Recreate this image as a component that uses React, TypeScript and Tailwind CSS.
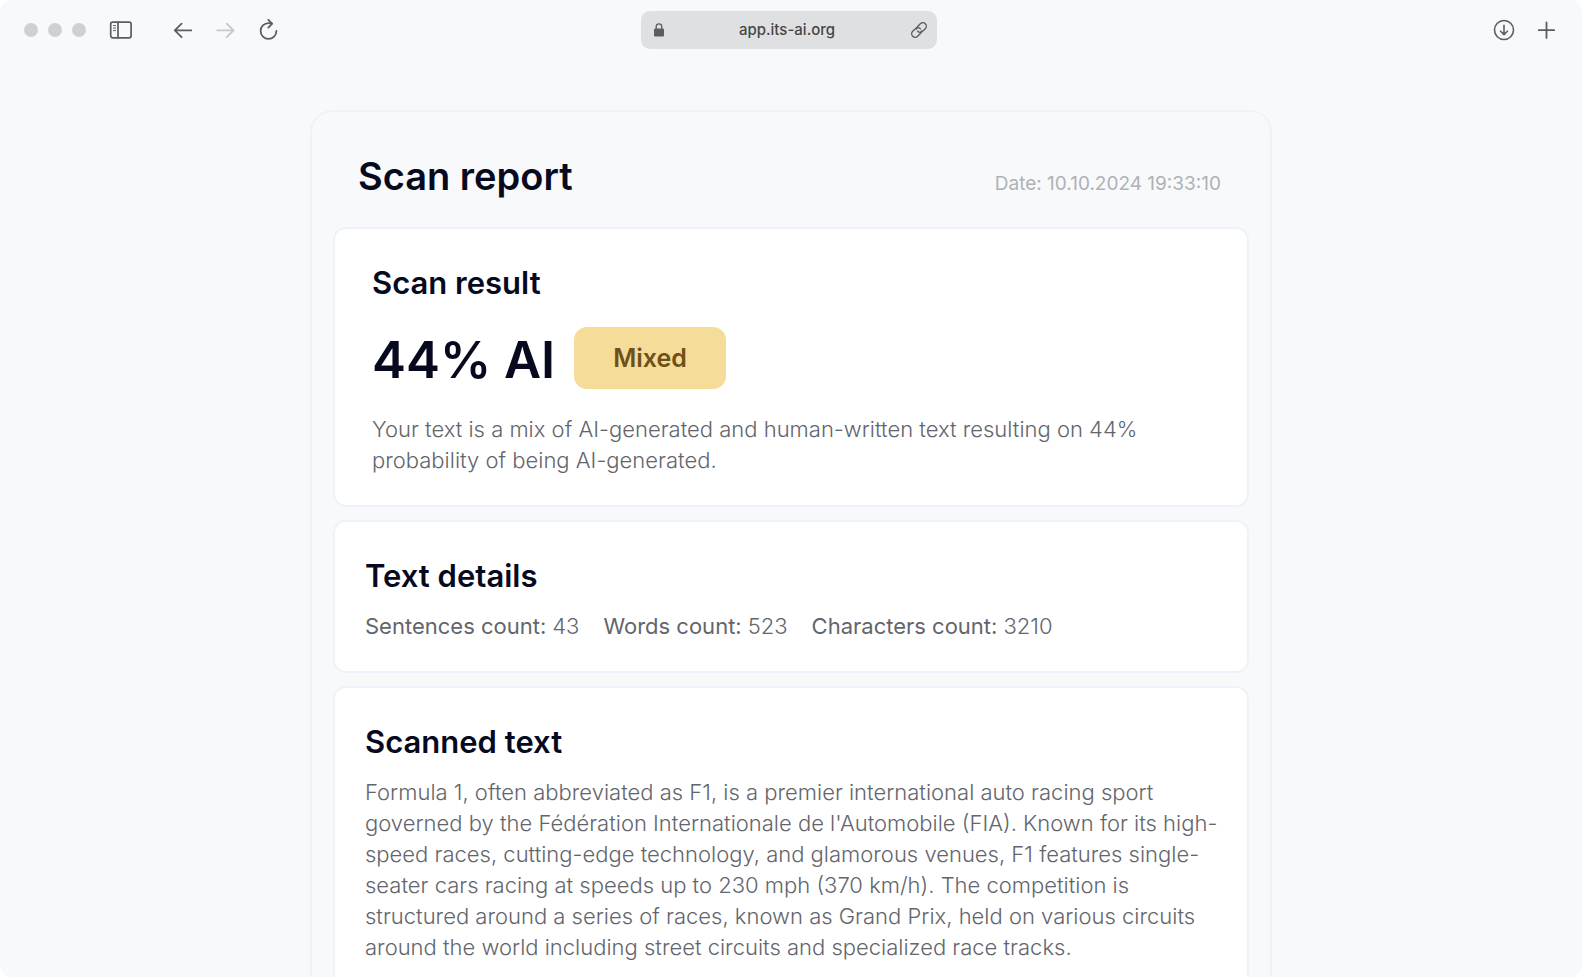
import type { ReactNode } from "react";

const details = [
  { label: "Sentences count:", value: "43" },
  { label: "Words count:", value: "523" },
  { label: "Characters count:", value: "3210" },
];

function ToolButton({ label, children }: { label: string; children: ReactNode }) {
  return (
    <button type="button" aria-label={label} className="flex size-6 items-center justify-center">
      {children}
    </button>
  );
}

const stroke = {
  fill: "none",
  stroke: "currentColor",
  strokeWidth: 1.8,
  strokeLinecap: "round" as const,
  strokeLinejoin: "round" as const,
};

function Toolbar() {
  return (
    <header className="grid h-15 grid-cols-[1fr_296px_1fr] items-center pr-6 pl-5 text-[#5c5d5f]">
      <div className="flex items-center pl-1">
        <div className="flex gap-2.5">
          <span className="size-3.5 rounded-full bg-[#cfd0d2]" />
          <span className="size-3.5 rounded-full bg-[#cfd0d2]" />
          <span className="size-3.5 rounded-full bg-[#cfd0d2]" />
        </div>
        <div className="ml-[23px] flex">
          <ToolButton label="Toggle sidebar">
            <svg width="24" height="24" viewBox="0 0 24 24" {...stroke} strokeWidth={1.7}>
              <rect x="1.7" y="4.2" width="20.4" height="15.6" rx="2" />
              <path d="M9 4.2v15.6" />
              <path d="M4.4 7.6h2.2M4.4 10.1h2.2M4.4 12.6h2.2" strokeWidth="1" />
            </svg>
          </ToolButton>
        </div>
        <div className="ml-[38px] flex gap-[19px]">
          <ToolButton label="Back">
            <svg width="24" height="24" viewBox="0 0 24 24" {...stroke}>
              <path d="M20.3 12.4H4M10.6 5.6 3.8 12.4l6.8 6.8" />
            </svg>
          </ToolButton>
          <ToolButton label="Forward">
            <svg width="24" height="24" viewBox="0 0 24 24" className="text-[#c6c8ca]" {...stroke}>
              <path d="M3.2 12.4h16.3M12.7 5.6l6.8 6.8-6.8 6.8" />
            </svg>
          </ToolButton>
          <ToolButton label="Reload">
            <svg width="24" height="24" viewBox="0 0 24 24" {...stroke}>
              <path d="M19.4 13a7.9 7.9 0 1 1-7.9-7.9c1.2 0 2.2.1 3.2.6" />
              <path d="M11.3 1.8 15.2 5.6 11.3 9.6" />
            </svg>
          </ToolButton>
        </div>
      </div>

      <div className="flex h-9.5 items-center justify-between rounded-[9px] bg-[#dfe0e2] pr-1.5 pl-2.5">
        <svg width="16" height="18" viewBox="0 0 16 18" aria-hidden="true">
          <rect x="3" y="7.6" width="10" height="8" rx="1.3" fill="currentColor" />
          <path d="M5.2 8V5.6a2.8 2.8 0 0 1 5.6 0V8" fill="none" stroke="currentColor" strokeWidth="1.3" />
        </svg>
        <span className="text-[15px] leading-6 font-medium text-[#454648]">app.its-ai.org</span>
        <ToolButton label="Copy link">
          <svg width="20" height="20" viewBox="0 0 20 20" {...stroke} strokeWidth={1.4}>
            <g transform="rotate(-45 10 10)">
              <path d="M10.9 12.4A3.5 3.5 0 0 1 8.4 13.5H4.6a3.5 3.5 0 0 1 0-7H8.4a3.5 3.5 0 0 1 3.5 3.5" />
              <path d="M9.1 7.6A3.5 3.5 0 0 1 11.6 6.5h3.8a3.5 3.5 0 0 1 0 7h-3.8A3.5 3.5 0 0 1 8.1 10" />
            </g>
          </svg>
        </ToolButton>
      </div>

      <div className="flex items-center justify-end gap-[18px]">
        <ToolButton label="Downloads">
          <svg width="24" height="24" viewBox="0 0 24 24" {...stroke} strokeWidth={1.6}>
            <circle cx="12" cy="12" r="9.5" />
            <path d="M12 7.4v9M8.6 13.2l3.4 3.4 3.4-3.4" />
          </svg>
        </ToolButton>
        <ToolButton label="New tab">
          <svg width="24" height="24" viewBox="0 0 24 24" {...stroke}>
            <path d="M12.5 4.5v15.4M4.8 12.2h15.4" />
          </svg>
        </ToolButton>
      </div>
    </header>
  );
}

export default function App() {
  return (
    <div className="h-screen overflow-hidden bg-white font-['Inter','Liberation_Sans',sans-serif]">
      <div className="flex min-h-full flex-col rounded-[12px] bg-[#f8f9fb]">
        <Toolbar />
        <main className="mx-auto mt-[50px] flex w-full max-w-[962px] grow flex-col rounded-t-[22px] border-2 border-b-0 border-[#eef2fb] px-[21px]">
          <div className="flex items-baseline justify-between pt-10 pr-7 pb-[27px] pl-[25px]">
            <h1 className="text-[38px] leading-[48px] font-semibold text-[#070a1f]">Scan report</h1>
            <p className="text-[19px] leading-7 text-[#afb1b7]">Date: 10.10.2024 19:33:10</p>
          </div>

          <div className="flex grow flex-col gap-[13px]">
            <section className="rounded-[13px] border-2 border-[#eef2fb] bg-white px-[37px] pt-[34px] pb-[29px]">
              <h2 className="text-[31px] leading-10 font-semibold text-[#070a1f]">Scan result</h2>
              <div className="mt-[22px] flex items-center gap-[19px]">
                <p className="pt-1 text-[51px] leading-[62px] font-semibold text-[#070a1f]">44% AI</p>
                <span className="rounded-[13px] bg-[#f5dc98] px-[39px] py-[15px] text-[25px] leading-8 font-semibold text-[#6e5018]">
                  Mixed
                </span>
              </div>
              <p className="mt-[23px] text-[22px] leading-[31px] font-light text-[#63656c]">
                Your text is a mix of AI-generated and human-written text resulting on 44%
                <br />
                probability of being AI-generated.
              </p>
            </section>

            <section className="rounded-[13px] border-2 border-[#eef2fb] bg-white px-[30px] pt-[34px] pb-[29px]">
              <h2 className="text-[31px] leading-10 font-semibold text-[#070a1f]">Text details</h2>
              <dl className="mt-[15px] flex flex-wrap gap-x-6 text-[22px] leading-[31px] text-[#63656c]">
                {details.map((item) => (
                  <div key={item.label} className="flex gap-1.5">
                    <dt>{item.label}</dt>
                    <dd className="font-light">{item.value}</dd>
                  </div>
                ))}
              </dl>
            </section>

            <section className="grow rounded-t-[13px] border-2 border-b-0 border-[#eef2fb] bg-white pt-[34px] pr-4 pl-[30px]">
              <h2 className="text-[31px] leading-10 font-semibold text-[#070a1f]">Scanned text</h2>
              <p className="mt-[15px] text-[22px] leading-[31px] font-light text-[#63656c]">
                Formula 1, often abbreviated as F1, is a premier international auto racing sport
                <br />
                governed by the Fédération Internationale de l'Automobile (FIA). Known for its high-
                <br />
                speed races, cutting-edge technology, and glamorous venues, F1 features single-
                <br />
                seater cars racing at speeds up to 230 mph (370 km/h). The competition is
                <br />
                structured around a series of races, known as Grand Prix, held on various circuits
                <br />
                around the world including street circuits and specialized race tracks.
              </p>
            </section>
          </div>
        </main>
      </div>
    </div>
  );
}
